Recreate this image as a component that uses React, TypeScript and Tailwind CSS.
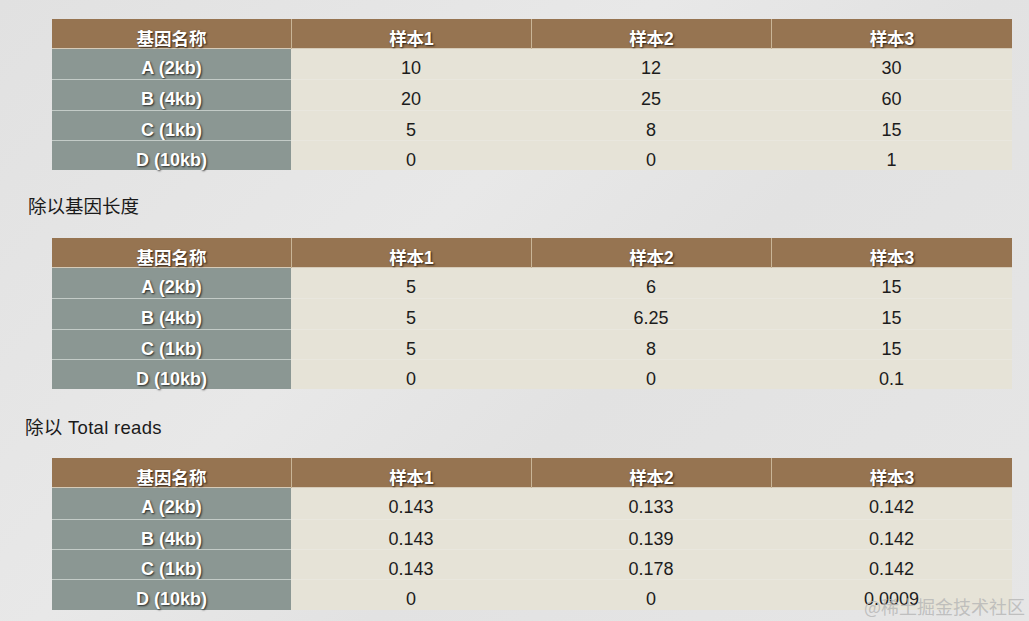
const font = "font-['Liberation_Sans','Noto_Sans_CJK_SC',sans-serif]";

type Table = { rows: [string, string, string, string][] };

const tables: Table[] = [
  {
    rows: [
      ["A (2kb)", "10", "12", "30"],
      ["B (4kb)", "20", "25", "60"],
      ["C (1kb)", "5", "8", "15"],
      ["D (10kb)", "0", "0", "1"],
    ],
  },
  {
    rows: [
      ["A (2kb)", "5", "6", "15"],
      ["B (4kb)", "5", "6.25", "15"],
      ["C (1kb)", "5", "8", "15"],
      ["D (10kb)", "0", "0", "0.1"],
    ],
  },
  {
    rows: [
      ["A (2kb)", "0.143", "0.133", "0.142"],
      ["B (4kb)", "0.143", "0.139", "0.142"],
      ["C (1kb)", "0.143", "0.178", "0.142"],
      ["D (10kb)", "0", "0", "0.0009"],
    ],
  },
];

const shadow = "[text-shadow:1px_1px_2px_rgba(0,0,0,0.75)]";

function DataTable({ table }: { table: Table }) {
  const headers = ["基因名称", "样本1", "样本2", "样本3"];
  return (
    <div className="ml-[52px] w-[960px]">
      <div className="grid grid-cols-[239px_240px_240px_241px] h-[30px] bg-[#967451] border-b border-[#d6cbb8]">
        {headers.map((h, i) => (
          <div
            key={h}
            className={`flex justify-center pt-[12px] leading-none text-[17.5px] font-bold text-white ${shadow} ${
              i > 0 ? "border-l border-[#c9b597]" : ""
            }`}
          >
            {h}
          </div>
        ))}
      </div>
      {table.rows.map((r, ri) => (
        <div
          key={ri}
          className="grid grid-cols-[239px_240px_240px_241px] h-[30.3px]"
        >
          <div
            className={`flex justify-center pt-[10px] leading-none bg-[#8b9793] text-[18px] font-bold text-white ${shadow} ${
              ri > 0 ? "border-t border-[#c3cbc7]" : ""
            }`}
          >
            {r[0]}
          </div>
          {r.slice(1).map((v, ci) => (
            <div
              key={ci}
              className={`flex justify-center pt-[10px] leading-none bg-[#e6e3d7] text-[18px] text-[#1c1c1c] ${
                ri > 0 ? "border-t border-[#e9e7de]" : ""
              }`}
            >
              {v}
            </div>
          ))}
        </div>
      ))}
    </div>
  );
}

export default function App() {
  return (
    <div
      className={`relative w-[1029px] h-[621px] overflow-hidden bg-[linear-gradient(135deg,#e1e1e1_0%,#e8e8e8_40%,#e2e2e2_60%,#e6e6e6_100%)] ${font}`}
    >
      <div className="pt-[19px]">
        <DataTable table={tables[0]} />
        <div className="ml-[28px] mt-[25px] mb-[19px] h-[24px] leading-[24px] text-[18.5px] text-[#1a1a1a]">
          除以基因长度
        </div>
        <DataTable table={tables[1]} />
        <div className="ml-[25px] mt-[27px] mb-[18px] h-[24px] leading-[24px] text-[18.5px] tracking-[0.3px] text-[#1a1a1a]">
          除以 Total reads
        </div>
        <DataTable table={tables[2]} />
      </div>
      <div className="absolute right-[4px] bottom-[6px] leading-none text-[18px] text-[#b5b5b5]/80 font-['Noto_Sans_CJK_SC',sans-serif]">
        @稀土掘金技术社区
      </div>
    </div>
  );
}
